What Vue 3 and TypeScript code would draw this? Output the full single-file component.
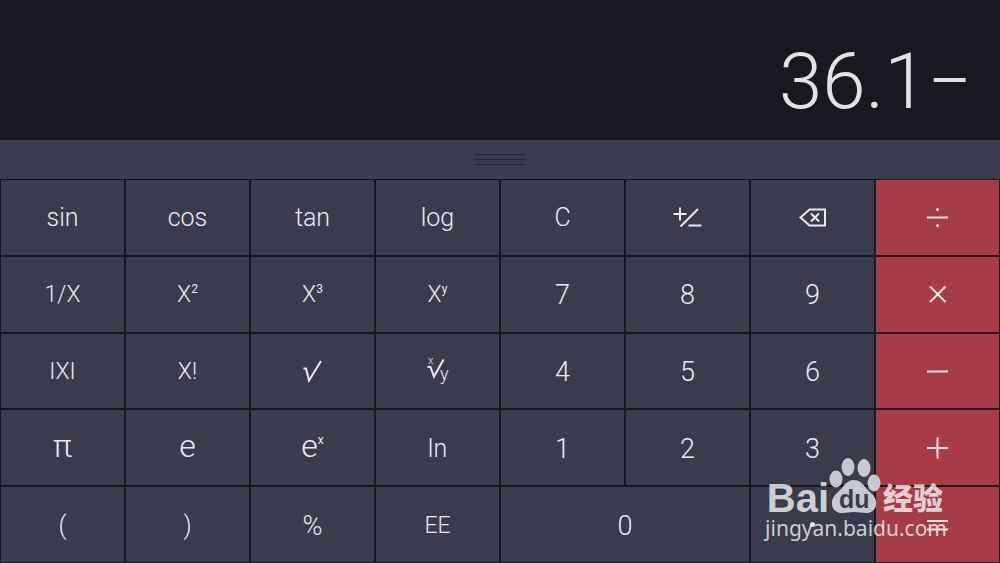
<script setup lang="ts">
import { ref } from 'vue'

type Kind = 'word' | 'digit' | 'algebra' | 'large' | 'symbol'

interface Key {
  id: string
  label: string
  kind: Kind
  text?: string
  sup?: string
  op?: boolean
  wide?: boolean
}

const display = ref<string>('36.1−')

const keys: Key[] = [
  { id: 'sin', label: 'Sine', kind: 'word', text: 'sin' },
  { id: 'cos', label: 'Cosine', kind: 'word', text: 'cos' },
  { id: 'tan', label: 'Tangent', kind: 'word', text: 'tan' },
  { id: 'log', label: 'Logarithm', kind: 'word', text: 'log' },
  { id: 'clear', label: 'Clear', kind: 'word', text: 'C' },
  { id: 'sign', label: 'Change sign', kind: 'symbol' },
  { id: 'back', label: 'Backspace', kind: 'symbol' },
  { id: 'divide', label: 'Divide', kind: 'symbol', op: true },
  { id: 'inverse', label: 'Reciprocal', kind: 'algebra', text: '1/X' },
  { id: 'square', label: 'Square', kind: 'algebra', text: 'X', sup: '2' },
  { id: 'cube', label: 'Cube', kind: 'algebra', text: 'X', sup: '3' },
  { id: 'power', label: 'Power', kind: 'algebra', text: 'X', sup: 'y' },
  { id: '7', label: '7', kind: 'digit', text: '7' },
  { id: '8', label: '8', kind: 'digit', text: '8' },
  { id: '9', label: '9', kind: 'digit', text: '9' },
  { id: 'times', label: 'Multiply', kind: 'symbol', op: true },
  { id: 'abs', label: 'Absolute value', kind: 'algebra', text: 'IXI' },
  { id: 'factorial', label: 'Factorial', kind: 'algebra', text: 'X!' },
  { id: 'sqrt', label: 'Square root', kind: 'symbol' },
  { id: 'root', label: 'Root', kind: 'symbol' },
  { id: '4', label: '4', kind: 'digit', text: '4' },
  { id: '5', label: '5', kind: 'digit', text: '5' },
  { id: '6', label: '6', kind: 'digit', text: '6' },
  { id: 'minus', label: 'Subtract', kind: 'symbol', op: true },
  { id: 'pi', label: 'Pi', kind: 'large', text: 'π' },
  { id: 'e', label: 'Euler number', kind: 'large', text: 'e' },
  { id: 'exp', label: 'Exponential', kind: 'large', text: 'e', sup: 'x' },
  { id: 'ln', label: 'Natural logarithm', kind: 'word', text: 'ln' },
  { id: '1', label: '1', kind: 'digit', text: '1' },
  { id: '2', label: '2', kind: 'digit', text: '2' },
  { id: '3', label: '3', kind: 'digit', text: '3' },
  { id: 'plus', label: 'Add', kind: 'symbol', op: true },
  { id: 'open', label: 'Open parenthesis', kind: 'word', text: '(' },
  { id: 'close', label: 'Close parenthesis', kind: 'word', text: ')' },
  { id: 'percent', label: 'Percent', kind: 'digit', text: '%' },
  { id: 'ee', label: 'Exponent entry', kind: 'algebra', text: 'EE' },
  { id: '0', label: '0', kind: 'digit', text: '0', wide: true },
  { id: 'point', label: 'Decimal point', kind: 'symbol' },
  { id: 'equals', label: 'Equals', kind: 'symbol', op: true },
]

const shapes: Record<string, string> = {
  sign: 'M1.500 13H14.500M8 6.500V19.500M8.500 25.500L26 8M16.500 24.500H29.500',
  back: 'M12.500 8.500H28V24.500H12.500L3.500 16.500ZM14 12.500L22 20.500M22 12.500L14 20.500',
  divide: 'M5 16.500H26',
  times: 'M8 8.500L23.500 24M23.500 8.500L8 24',
  sqrt: 'M6.500 13.500H9L12 25.500L24 6',
  root: 'M5.500 12H8.500L12 21.500L21.500 4.500',
  minus: 'M5 16.500H26',
  plus: 'M5 16H26M15.500 5.500V26.500',
  equals: 'M5 12H26M5 20.500H26',
}
</script>

<template>
  <main class="calculator">
    <output class="display">{{ display }}</output>
    <button class="handle" type="button" aria-label="Resize keypad">
      <span></span><span></span><span></span>
    </button>
    <div class="keypad">
      <button
        v-for="key in keys"
        :key="key.id"
        type="button"
        class="key"
        :class="[key.kind, { op: key.op, wide: key.wide }]"
        :aria-label="key.label"
      >
        <svg v-if="key.kind === 'symbol'" class="icon" viewBox="0 0 32 32" aria-hidden="true">
          <path v-if="shapes[key.id]" :d="shapes[key.id]" />
          <template v-if="key.id === 'divide'">
            <circle cx="15.500" cy="8.500" r="1.500" />
            <circle cx="15.500" cy="24.500" r="1.500" />
          </template>
          <circle v-if="key.id === 'point'" cx="15.500" cy="15.500" r="2.500" />
          <template v-if="key.id === 'root'">
            <text x="6" y="9" font-size="11">x</text>
            <text x="18" y="25" font-size="18">y</text>
          </template>
        </svg>
        <span v-else>{{ key.text }}</span>
        <span v-if="key.sup" class="sup">{{ key.sup }}</span>
      </button>
    </div>
    <aside class="watermark">
      <div class="brand">
        <span class="bai">Bai</span>
        <svg class="paw" viewBox="0 0 54 58" aria-hidden="true">
          <ellipse cx="7" cy="22" rx="6.500" ry="8.500" />
          <ellipse cx="19" cy="10" rx="6.500" ry="9" />
          <ellipse cx="35" cy="11" rx="6.500" ry="9" />
          <ellipse cx="45" cy="26" rx="6.500" ry="8.500" />
          <path d="M25 23C33 23 35 30 42 36C50 42 49 56 37 56C33 56 30 55 25 55C20 55 17 56 13 56C1 56 0 42 8 36C15 30 17 23 25 23Z" />
          <text x="10" y="51">du</text>
        </svg>
        <span class="cn">经验</span>
      </div>
      <div class="url">jingyan.baidu.com</div>
    </aside>
  </main>
</template>

<style>
body {
  margin: 0;
  background: #181820;
}
</style>

<style scoped>
.calculator {
  position: relative;
  display: grid;
  grid-template-rows: 140px 39px 1fr;
  min-height: 100vh;
  background: #181820;
  color: #e9e9f3;
  font-family: Roboto, "Liberation Sans", sans-serif;
  font-weight: 300;
}

.display {
  display: flex;
  align-items: center;
  justify-content: flex-end;
  padding: 24px 28px 0 0;
  color: #e2e2e4;
  font-size: 78px;
  line-height: 80px;
}

.handle {
  display: flex;
  flex-direction: column;
  align-items: center;
  justify-content: center;
  gap: 4px;
  padding: 0;
  border: 0;
  background: #3a3c4a;
}

.handle span {
  width: 52px;
  height: 1px;
  background: #262733;
}

.keypad {
  display: grid;
  grid-template-columns: repeat(8, 1fr);
  grid-template-rows: repeat(5, 1fr);
}

.key {
  display: flex;
  align-items: center;
  justify-content: center;
  min-width: 0;
  padding: 0;
  border: 1px solid #171721;
  background: #3a3c4a;
  color: inherit;
  font: inherit;
  line-height: 32px;
}

.wide {
  grid-column: span 2;
}

.op {
  border-color: #2a1720;
  background: #a53c46;
  color: #fbe4ec;
}

.word {
  padding-top: 2px;
  font-size: 25px;
}

.digit {
  padding-top: 2px;
  font-size: 27px;
}

.large {
  padding-bottom: 4px;
  font-size: 32px;
}

.algebra {
  padding-top: 2px;
  font-size: 23px;
}

.sup {
  padding-bottom: 12px;
  font-size: 12px;
  font-weight: 400;
  line-height: 12px;
}

.icon {
  width: 32px;
  height: 32px;
  fill: none;
  stroke: currentColor;
  stroke-width: 2;
}

.icon circle,
.icon text {
  fill: currentColor;
  stroke: none;
}

.watermark {
  position: absolute;
  right: 53px;
  bottom: 22px;
  color: rgba(255, 255, 255, 0.75);
  pointer-events: none;
}

.brand {
  display: flex;
  align-items: flex-end;
  justify-content: flex-end;
  height: 58px;
  padding-right: 4px;
}

.bai {
  font: bold 40px/34px "Liberation Sans", sans-serif;
}

.paw {
  width: 54px;
  height: 58px;
  fill: #c8c9ce;
}

.paw text {
  fill: #3a3c4a;
  font: bold 25px "Liberation Sans", sans-serif;
}

.cn {
  font: 900 30px/38px "Noto Sans CJK SC", sans-serif;
}

.url {
  font: 400 21px/26px "Noto Sans", sans-serif;
}
</style>
